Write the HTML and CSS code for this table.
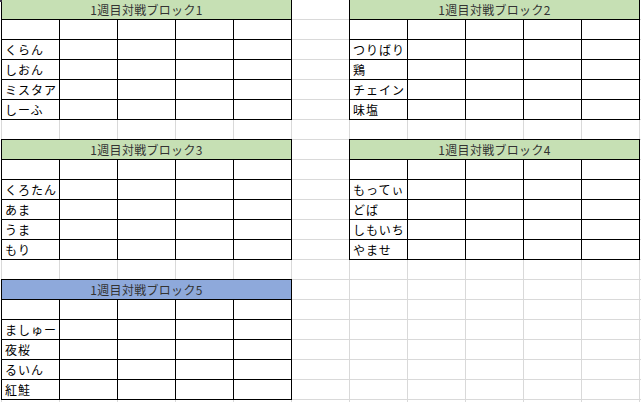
FILE: index.html
```html
<!DOCTYPE html>
<html lang="ja">
<head>
<meta charset="utf-8">
<title>1週目対戦ブロック</title>
<link rel="stylesheet" href="styles.css">
</head>
<body>
<div class="corner"></div>
<div class="sheet">
  <div class="block b1">
    <div class="hd">1週目対戦ブロック1</div>
    <div class="c"></div><div class="c"></div><div class="c"></div><div class="c"></div><div class="c"></div>
    <div class="c n">くらん</div><div class="c"></div><div class="c"></div><div class="c"></div><div class="c"></div>
    <div class="c n">しおん</div><div class="c"></div><div class="c"></div><div class="c"></div><div class="c"></div>
    <div class="c n">ミスタア</div><div class="c"></div><div class="c"></div><div class="c"></div><div class="c"></div>
    <div class="c n">しーふ</div><div class="c"></div><div class="c"></div><div class="c"></div><div class="c"></div>
  </div>
  <div class="block b2">
    <div class="hd">1週目対戦ブロック2</div>
    <div class="c"></div><div class="c"></div><div class="c"></div><div class="c"></div><div class="c"></div>
    <div class="c n">つりばり</div><div class="c"></div><div class="c"></div><div class="c"></div><div class="c"></div>
    <div class="c n">鶏</div><div class="c"></div><div class="c"></div><div class="c"></div><div class="c"></div>
    <div class="c n">チェイン</div><div class="c"></div><div class="c"></div><div class="c"></div><div class="c"></div>
    <div class="c n">味塩</div><div class="c"></div><div class="c"></div><div class="c"></div><div class="c"></div>
  </div>
  <div class="block b3">
    <div class="hd">1週目対戦ブロック3</div>
    <div class="c"></div><div class="c"></div><div class="c"></div><div class="c"></div><div class="c"></div>
    <div class="c n">くろたん</div><div class="c"></div><div class="c"></div><div class="c"></div><div class="c"></div>
    <div class="c n">あま</div><div class="c"></div><div class="c"></div><div class="c"></div><div class="c"></div>
    <div class="c n">うま</div><div class="c"></div><div class="c"></div><div class="c"></div><div class="c"></div>
    <div class="c n">もり</div><div class="c"></div><div class="c"></div><div class="c"></div><div class="c"></div>
  </div>
  <div class="block b4">
    <div class="hd">1週目対戦ブロック4</div>
    <div class="c"></div><div class="c"></div><div class="c"></div><div class="c"></div><div class="c"></div>
    <div class="c n">もってぃ</div><div class="c"></div><div class="c"></div><div class="c"></div><div class="c"></div>
    <div class="c n">どば</div><div class="c"></div><div class="c"></div><div class="c"></div><div class="c"></div>
    <div class="c n">しもいち</div><div class="c"></div><div class="c"></div><div class="c"></div><div class="c"></div>
    <div class="c n">やませ</div><div class="c"></div><div class="c"></div><div class="c"></div><div class="c"></div>
  </div>
  <div class="block b5">
    <div class="hd blue">1週目対戦ブロック5</div>
    <div class="c"></div><div class="c"></div><div class="c"></div><div class="c"></div><div class="c"></div>
    <div class="c n">ましゅー</div><div class="c"></div><div class="c"></div><div class="c"></div><div class="c"></div>
    <div class="c n">夜桜</div><div class="c"></div><div class="c"></div><div class="c"></div><div class="c"></div>
    <div class="c n">るいん</div><div class="c"></div><div class="c"></div><div class="c"></div><div class="c"></div>
    <div class="c n">紅鮭</div><div class="c"></div><div class="c"></div><div class="c"></div><div class="c"></div>
  </div>
</div>
</body>
</html>
```
FILE: styles.css
```css
html, body {
  margin: 0;
  padding: 0;
  background: #fff;
  overflow: hidden;
  width: 641px;
  height: 402px;
}
body {
  font-family: "Noto Sans CJK JP", "Noto Sans", sans-serif;
  position: relative;
}
.corner {
  position: absolute;
  left: 0;
  top: 0;
  width: 2px;
  height: 2px;
  background: #3c3346;
  z-index: 2;
}
.sheet {
  margin: -1px 0 0 1px;
  display: grid;
  grid-template-columns: repeat(11, 58px) 2px;
  grid-template-rows: repeat(20, 20px) 3px;
  width: 640px;
  height: 403px;
  overflow: hidden;
  background-image:
    linear-gradient(to right, #d9d9d9 1px, transparent 1px),
    linear-gradient(to bottom, #d9d9d9 1px, transparent 1px);
  background-size: 58px 20px;
}
.block {
  width: 291px;
  height: 121px;
  box-sizing: border-box;
  display: grid;
  grid-template-columns: repeat(5, 58px);
  grid-template-rows: repeat(6, 20px);
  border-right: 1px solid #000;
  border-bottom: 1px solid #000;
  background: #fff;
  align-self: start;
  justify-self: start;
}
.b1 { grid-column: 1 / span 5; grid-row: 1 / span 6; }
.b2 { grid-column: 7 / span 5; grid-row: 1 / span 6; }
.b3 { grid-column: 1 / span 5; grid-row: 8 / span 6; }
.b4 { grid-column: 7 / span 5; grid-row: 8 / span 6; }
.b5 { grid-column: 1 / span 5; grid-row: 15 / span 6; }
.hd {
  grid-column: 1 / span 5;
  box-sizing: border-box;
  border-left: 1px solid #000;
  border-top: 1px solid #000;
  background: #c6e0b4;
  color: #333;
  font-size: 12px;
  letter-spacing: 0.3px;
  line-height: 19px;
  text-align: center;
}
.hd.blue { background: #8ea9db; }
.c {
  box-sizing: border-box;
  border-left: 1px solid #000;
  border-top: 1px solid #000;
}
.n {
  font-size: 12px;
  line-height: 19px;
  padding-left: 3px;
  letter-spacing: 1px;
  color: #000;
  white-space: nowrap;
  overflow: hidden;
}
```
